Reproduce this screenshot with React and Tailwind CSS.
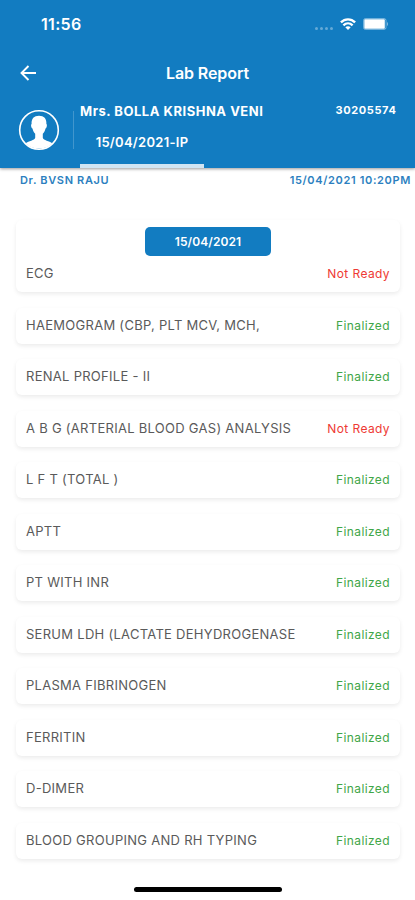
const reports = [
  { name: "HAEMOGRAM (CBP, PLT MCV, MCH,", ready: true },
  { name: "RENAL PROFILE - II", ready: true },
  { name: "A B G (ARTERIAL BLOOD GAS) ANALYSIS", ready: false },
  { name: "L F T (TOTAL )", ready: true },
  { name: "APTT", ready: true },
  { name: "PT WITH INR", ready: true },
  { name: "SERUM LDH (LACTATE DEHYDROGENASE", ready: true },
  { name: "PLASMA FIBRINOGEN", ready: true },
  { name: "FERRITIN", ready: true },
  { name: "D-DIMER", ready: true },
  { name: "BLOOD GROUPING AND RH TYPING", ready: true },
];

function StatusBar() {
  return (
    <div className="h-12 pl-[41px] pr-[26px] flex items-center justify-between">
      <span className="text-base font-semibold tracking-[0.3px]">11:56</span>
      <div className="flex items-center">
        <div className="flex gap-[2px] mr-[7px] mt-2">
          {[0, 1, 2, 3].map((i) => (
            <span key={i} className="w-[3px] h-[3px] rounded-full bg-white/35" />
          ))}
        </div>
        <svg width="16" height="12" viewBox="0 0 16 12" fill="none" stroke="white" strokeWidth="2.4" className="mr-[7px]">
          <path d="M0.9 4.4C5 0.4 11 0.4 15.1 4.4" />
          <path d="M3.4 7.3C6.1 4.7 9.9 4.7 12.6 7.3" />
          <path d="M5.3 9.3C6.9 7.9 9.1 7.9 10.7 9.3L8 12Z" fill="white" stroke="none" />
        </svg>
        <svg width="26" height="12" viewBox="0 0 26 12">
          <rect x="0.5" y="0.5" width="22.5" height="11" rx="2" fill="none" stroke="white" strokeOpacity="0.4" />
          <rect x="1.3" y="1.3" width="20.5" height="9.4" rx="0.8" fill="white" />
          <path d="M24 4v4c1.3-.6 1.3-3.4 0-4z" fill="white" fillOpacity="0.5" />
        </svg>
      </div>
    </div>
  );
}

function Avatar() {
  return (
    <svg width="42" height="42" viewBox="0 0 42 42">
      <circle cx="21" cy="21" r="19.3" fill="none" stroke="white" strokeWidth="1.6" />
      <path
        d="M21 6.8c-5 0-7.7 2.9-7.4 8.2-1 .6-.4 4 .9 4.6.4 2.2 1.4 4 2.7 5.2v4c-.6 2.6-6.6 3.3-9.5 5.4A18.4 18.4 0 0 0 21 39.6a18.4 18.4 0 0 0 13.3-5.4c-2.9-2.1-8.9-2.8-9.5-5.4v-4c1.3-1.2 2.3-3 2.7-5.2 1.3-.6 1.9-4 .9-4.6.3-5.3-2.4-8.2-7.4-8.2z"
        fill="white"
      />
    </svg>
  );
}

function ReportRow({ name, ready }) {
  return (
    <div className="flex items-center justify-between px-[10px] h-9">
      <span className="text-[13px] text-[#5a5a5a] tracking-[0.28px] whitespace-nowrap">{name}</span>
      <span className={ready ? "text-xs text-[#3fa648] tracking-[0.4px]" : "text-xs text-[#ee3a34] tracking-[0.4px]"}>
        {ready ? "Finalized" : "Not Ready"}
      </span>
    </div>
  );
}

export default function App() {
  return (
    <div className="w-[415px] h-[900px] bg-white font-['Inter',sans-serif] flex flex-col overflow-hidden">
      <header className="h-[168px] shrink-0 bg-[#127cc1] text-white shadow-[0_1px_3px_rgba(0,0,0,0.4)]">
        <StatusBar />
        <div className="h-[50px] px-5 grid grid-cols-[1fr_auto_1fr] items-center">
          <svg width="16" height="16" viewBox="0 0 16 16" fill="none" stroke="white" strokeWidth="1.9">
            <path d="M16 8H1.5M8.5 1L1.5 8l7 7" />
          </svg>
          <h1 className="text-base font-semibold tracking-[-0.1px]">Lab Report</h1>
        </div>
        <div className="h-[70px] flex pl-[18px] pr-[18.5px]">
          <div className="pt-[11px]">
            <Avatar />
          </div>
          <div className="w-px h-[38px] mt-[13px] ml-[13px] mr-[6px] bg-white/20" />
          <div className="flex-1 flex flex-col">
            <div className="flex justify-between pt-1">
              <span className="text-[13px] leading-[18px] font-bold tracking-[0.52px]">Mrs. BOLLA KRISHNA VENI</span>
              <span className="text-[11px] leading-4 font-bold tracking-[0.6px]">30205574</span>
            </div>
            <div className="w-[124px] flex-1 pt-[13px] text-center text-[13px] leading-[18px] font-semibold tracking-[0.28px] border-b-4 border-white/80">
              15/04/2021-IP
            </div>
          </div>
        </div>
      </header>

      <div className="flex justify-between pl-5 pr-1 pt-1 h-[52px] shrink-0 text-[11px] leading-4 font-semibold tracking-[0.65px] text-[#2c7fc0]">
        <span>Dr. BVSN RAJU</span>
        <span>15/04/2021 10:20PM</span>
      </div>

      <main className="pl-4 pr-[15px] flex flex-col gap-[15.5px]">
        <div className="h-[72px] rounded-md shadow-[0_2px_4px_rgba(0,0,0,0.08)] pt-[7px] flex flex-col">
          <div className="w-[126px] h-[29px] mx-auto shrink-0 rounded-[5px] bg-[#127cc1] text-white text-xs font-semibold tracking-[0.1px] flex items-center justify-center">
            15/04/2021
          </div>
          <ReportRow name="ECG" ready={false} />
        </div>
        {reports.map((report) => (
          <div key={report.name} className="rounded-md shadow-[0_2px_4px_rgba(0,0,0,0.08)]">
            <ReportRow name={report.name} ready={report.ready} />
          </div>
        ))}
      </main>

      <div className="w-[148px] h-[5px] mt-auto mb-2 mx-auto rounded-full bg-black" />
    </div>
  );
}
